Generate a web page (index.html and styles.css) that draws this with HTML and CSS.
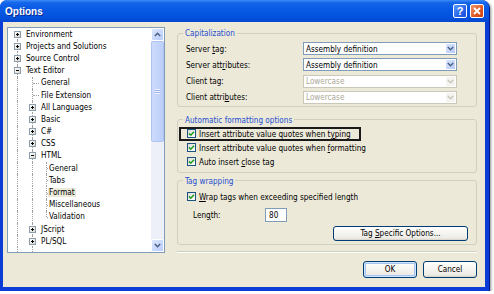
FILE: index.html
```html
<!DOCTYPE html>
<html lang="en">
<head>
    <meta charset="UTF-8">
    <meta name="viewport" content="width=device-width, initial-scale=1.0">
    <title>Options</title>
    <link rel="stylesheet" href="styles.css">
</head>
<body>
    <div class="window">
        <div class="titlebar">
            <span class="title">Options</span>
            <div class="caption-buttons">
                <span class="cap-btn help">?</span>
                <span class="cap-btn close">
                    <svg width="8" height="8" viewBox="0 0 8 8"><path d="M1 1L7 7M7 1L1 7" stroke="#fff" stroke-width="1.8"/></svg>
                </span>
            </div>
        </div>

        <div class="client">
            <!-- Category tree -->
            <div class="tree">
                <div class="nodes">
                    <div class="node"><span class="c v vb"><span class="x plus"></span></span><span class="lbl">Environment</span></div>
                    <div class="node"><span class="c v"><span class="x plus"></span></span><span class="lbl">Projects and Solutions</span></div>
                    <div class="node"><span class="c v"><span class="x plus"></span></span><span class="lbl">Source Control</span></div>
                    <div class="node"><span class="c v"><span class="x minus"></span></span><span class="lbl">Text Editor</span></div>
                    <div class="node"><span class="c v"></span><span class="c v t"></span><span class="lbl">General</span></div>
                    <div class="node"><span class="c v"></span><span class="c v t"></span><span class="lbl">File Extension</span></div>
                    <div class="node"><span class="c v"></span><span class="c v"><span class="x plus"></span></span><span class="lbl">All Languages</span></div>
                    <div class="node"><span class="c v"></span><span class="c v"><span class="x plus"></span></span><span class="lbl">Basic</span></div>
                    <div class="node"><span class="c v"></span><span class="c v"><span class="x plus"></span></span><span class="lbl">C#</span></div>
                    <div class="node"><span class="c v"></span><span class="c v"><span class="x plus"></span></span><span class="lbl">CSS</span></div>
                    <div class="node"><span class="c v"></span><span class="c v"><span class="x minus"></span></span><span class="lbl">HTML</span></div>
                    <div class="node"><span class="c v"></span><span class="c v"></span><span class="c n v t"></span><span class="lbl">General</span></div>
                    <div class="node"><span class="c v"></span><span class="c v"></span><span class="c n v t"></span><span class="lbl">Tabs</span></div>
                    <div class="node"><span class="c v"></span><span class="c v"></span><span class="c n v t"></span><span class="lbl sel">Format</span></div>
                    <div class="node"><span class="c v"></span><span class="c v"></span><span class="c n v t"></span><span class="lbl">Miscellaneous</span></div>
                    <div class="node"><span class="c v"></span><span class="c v"></span><span class="c n v vt t"></span><span class="lbl">Validation</span></div>
                    <div class="node"><span class="c v"></span><span class="c v"><span class="x plus"></span></span><span class="lbl">JScript</span></div>
                    <div class="node"><span class="c v"></span><span class="c v"><span class="x plus"></span></span><span class="lbl">PL/SQL</span></div>
                    <div class="node"><span class="c v"></span><span class="c v"></span></div>
                </div>
                <div class="scroll">
                    <span class="sb-btn">
                        <svg width="7" height="5" viewBox="0 0 7 5"><path d="M0.8 4L3.5 1.3L6.2 4" fill="none" stroke="#4D6185" stroke-width="1.5"/></svg>
                    </span>
                    <span class="thumb"><span class="grip"></span></span>
                    <span class="track"></span>
                    <span class="sb-btn">
                        <svg width="7" height="5" viewBox="0 0 7 5"><path d="M0.8 1L3.5 3.7L6.2 1" fill="none" stroke="#4D6185" stroke-width="1.5"/></svg>
                    </span>
                </div>
            </div>

            <!-- HTML > Format page -->
            <div class="pane">
                <fieldset class="group caps">
                    <legend>Capitalization</legend>
                    <div class="caps-grid">
                        <span>Server <u>t</u>ag:</span>
                        <span class="combo"><span class="val">Assembly definition</span><span class="drop"><svg width="7" height="5" viewBox="0 0 7 5"><path d="M0.8 1L3.5 3.7L6.2 1" fill="none" stroke="#4D6185" stroke-width="1.5"/></svg></span></span>
                        <span>Server att<u>r</u>ibutes:</span>
                        <span class="combo"><span class="val">Assembly definition</span><span class="drop"><svg width="7" height="5" viewBox="0 0 7 5"><path d="M0.8 1L3.5 3.7L6.2 1" fill="none" stroke="#4D6185" stroke-width="1.5"/></svg></span></span>
                        <span>Client tag:</span>
                        <span class="combo off"><span class="val">Lowercase</span><span class="drop"><svg width="7" height="5" viewBox="0 0 7 5"><path d="M0.8 1L3.5 3.7L6.2 1" fill="none" stroke="#C9C7BA" stroke-width="1.5"/></svg></span></span>
                        <span>Client attri<u>b</u>utes:</span>
                        <span class="combo off"><span class="val">Lowercase</span><span class="drop"><svg width="7" height="5" viewBox="0 0 7 5"><path d="M0.8 1L3.5 3.7L6.2 1" fill="none" stroke="#C9C7BA" stroke-width="1.5"/></svg></span></span>
                    </div>
                </fieldset>

                <fieldset class="group auto">
                    <legend>Automatic formatting options</legend>
                    <div class="check marked">
                        <span class="box"><svg width="7" height="7" viewBox="0 0 7 7"><path d="M1 3.4L2.8 5.2L6 1.8" fill="none" stroke="#21A121" stroke-width="1.6"/></svg></span>
                        <span>Insert attribute value quotes when t<u>y</u>ping</span>
                    </div>
                    <div class="check">
                        <span class="box"><svg width="7" height="7" viewBox="0 0 7 7"><path d="M1 3.4L2.8 5.2L6 1.8" fill="none" stroke="#21A121" stroke-width="1.6"/></svg></span>
                        <span>Insert attribute value quotes when <u>f</u>ormatting</span>
                    </div>
                    <div class="check">
                        <span class="box"><svg width="7" height="7" viewBox="0 0 7 7"><path d="M1 3.4L2.8 5.2L6 1.8" fill="none" stroke="#21A121" stroke-width="1.6"/></svg></span>
                        <span>Auto insert <u>c</u>lose tag</span>
                    </div>
                </fieldset>

                <fieldset class="group wrap">
                    <legend>Tag wrapping</legend>
                    <div class="check">
                        <span class="box"><svg width="7" height="7" viewBox="0 0 7 7"><path d="M1 3.4L2.8 5.2L6 1.8" fill="none" stroke="#21A121" stroke-width="1.6"/></svg></span>
                        <span><u>W</u>rap tags when exceeding specified length</span>
                    </div>
                    <div class="length-row">
                        <span class="length-label">Len<u>g</u>th:</span>
                        <span class="field">80</span>
                    </div>
                    <div class="tag-row">
                        <span class="btn tag-btn"><span>Tag <u>S</u>pecific Options...</span></span>
                    </div>
                </fieldset>

                <div class="separator"></div>

                <div class="dialog-buttons">
                    <span class="btn default">OK</span>
                    <span class="btn">Cancel</span>
                </div>
            </div>
        </div>
    </div>
</body>
</html>
```

FILE: styles.css
```css
* {
    box-sizing: border-box;
}

body {
    margin: 0;
    background: #fff;
    font-family: "DejaVu Sans Condensed", "Liberation Sans", sans-serif;
    font-size: 8.1px;
    color: #000;
}

u {
    text-decoration-thickness: 1px;
    text-underline-offset: 1px;
}

/* Window frame */
.window {
    width: 489px;
    height: 291px;
    display: flex;
    flex-direction: column;
    background: #0B3DD6;
    border-radius: 7px 7px 0 0;
    box-shadow: 1px 1px 0 #001A8C, 2px 2px 3px rgba(0, 0, 0, 0.45);
}

.titlebar {
    height: 22px;
    display: flex;
    align-items: center;
    justify-content: space-between;
    padding: 0 5px;
    border-radius: 7px 7px 0 0;
    background: linear-gradient(#3F8CF6 0%, #1566EA 12%, #0758E4 45%, #0453DE 75%, #0247CF 100%);
}

.title {
    color: #fff;
    font-family: "Liberation Sans", sans-serif;
    font-weight: bold;
    font-size: 10px;
    text-shadow: 1px 1px 0 #0B2A8F;
}

.caption-buttons {
    display: flex;
    gap: 3px;
}

.cap-btn {
    width: 14px;
    height: 14px;
    border: 1px solid #fff;
    border-radius: 2px;
    display: flex;
    align-items: center;
    justify-content: center;
    color: #fff;
    font-family: "Liberation Sans", sans-serif;
    font-weight: bold;
    font-size: 11px;
}

.help {
    background: linear-gradient(135deg, #5A9CFF, #2A63E8 60%, #1A4FD8);
}

.close {
    background: linear-gradient(135deg, #EC9A74, #E15A24 55%, #C9400F);
}

.client {
    flex: 1;
    margin: 0 4px 4px 3px;
    background: #ECE9D8;
    display: flex;
    gap: 12px;
    padding: 5px 0 0 4px;
}

/* Tree */
.tree {
    width: 158px;
    height: 226px;
    border: 1px solid #7F9DB9;
    background: #fff;
    display: flex;
    overflow: hidden;
}

.nodes {
    flex: 1;
    padding-left: 2px;
    overflow: hidden;
}

.node {
    display: flex;
    align-items: center;
    height: 12.2px;
    white-space: nowrap;
}

.c {
    position: relative;
    flex: none;
    width: 15px;
    height: 100%;
}

.c.n {
    width: 8px;
}

.c.v::before {
    content: "";
    position: absolute;
    left: 7px;
    top: 0;
    bottom: 0;
    border-left: 1px dotted #A0A0A0;
}

.c.n.v::before {
    left: 6px;
}

.c.vb::before {
    top: 50%;
}

.c.vt::before {
    bottom: 50%;
}

.c.t::after {
    content: "";
    position: absolute;
    left: 8px;
    right: 1px;
    top: 50%;
    border-top: 1px dotted #A0A0A0;
}

.c.n.t::after {
    left: 7px;
    right: 0;
}

.x {
    position: absolute;
    left: 4px;
    top: 50%;
    margin-top: -3.5px;
    width: 7px;
    height: 7px;
    border: 1px solid #8C9DAD;
    background: linear-gradient(135deg, #fff, #D9D7CC);
}

.x::before,
.plus::after {
    content: "";
    position: absolute;
    background: #000;
}

.x::before {
    left: 1px;
    top: 2px;
    width: 3px;
    height: 1px;
}

.plus::after {
    left: 2px;
    top: 1px;
    width: 1px;
    height: 3px;
}

.lbl {
    padding: 0 1px;
    line-height: 9px;
}

.lbl.sel {
    background: #ECE9D8;
}

.scroll {
    width: 13px;
    display: flex;
    flex-direction: column;
    background: #EEF0F9;
}

.sb-btn {
    height: 13px;
    flex: none;
    display: flex;
    align-items: center;
    justify-content: center;
    border: 1px solid #fff;
    border-radius: 2px;
    background: linear-gradient(135deg, #DCE6FD, #B9CDFA);
}

.thumb {
    height: 101px;
    flex: none;
    display: flex;
    align-items: center;
    justify-content: center;
    border: 1px solid #AFC3F3;
    border-radius: 2px;
    background: linear-gradient(90deg, #CDDBFC, #BCCFFA);
}

.grip {
    width: 5px;
    height: 5px;
    background: repeating-linear-gradient(#EEF3FF 0 1px, #9DB3E8 1px 2px);
}

.track {
    flex: 1;
}

/* Options page */
.pane {
    width: 300px;
    display: flex;
    flex-direction: column;
    padding-top: 1px;
    white-space: nowrap;
}

.group {
    margin: 0;
    min-width: 0;
    border: 1px solid #D0D0BF;
    border-radius: 3px;
    padding: 4px 8px 2px;
}

.group legend {
    color: #1F4FCF;
    line-height: 10px;
    padding: 0 2px;
    margin-left: -3px;
}

.caps-grid {
    display: grid;
    grid-template-columns: 117px 154px;
    row-gap: 3.3px;
    align-items: center;
}

.combo {
    height: 13px;
    display: flex;
    align-items: center;
    padding-left: 2px;
    border: 1px solid #7F9DB9;
    background: #fff;
}

.combo .val {
    flex: 1;
}

.drop {
    width: 11px;
    height: 11px;
    display: flex;
    align-items: center;
    justify-content: center;
    border: 1px solid #fff;
    border-radius: 1px;
    background: linear-gradient(135deg, #DCE6FD, #B5CAF8);
}

.combo.off {
    border-color: #C9C7BA;
    color: #ACA899;
}

.combo.off .drop {
    background: #F4F3EE;
}

.group.auto {
    margin-top: 8px;
    padding: 2px 8px 3px;
}

.check {
    display: flex;
    align-items: center;
    gap: 3px;
    height: 14px;
    padding-left: 1px;
}

.check.marked {
    width: 182px;
    margin-left: -7px;
    padding-left: 6px;
    border: 2px solid #1A1A1A;
}

.box {
    width: 9px;
    height: 9px;
    flex: none;
    display: flex;
    align-items: center;
    justify-content: center;
    border: 1px solid #1C5180;
    background: linear-gradient(135deg, #DCDCD7, #fff);
}

.group.wrap {
    margin-top: 3px;
    padding: 4px 8px 3px;
}

.length-row {
    display: flex;
    align-items: center;
    height: 14px;
    margin-top: 4px;
}

.length-label {
    width: 79px;
    padding-left: 7px;
}

.field {
    width: 22px;
    height: 14px;
    padding-left: 3px;
    display: flex;
    align-items: center;
    border: 1px solid #7F9DB9;
    background: #fff;
}

.tag-row {
    display: flex;
    justify-content: flex-end;
    margin-top: 4px;
}

.btn {
    height: 16px;
    display: flex;
    align-items: center;
    justify-content: center;
    border: 1px solid #003C74;
    border-radius: 3px;
    background: linear-gradient(#fff 0%, #F6F5F1 45%, #ECEBE6 85%, #D8D2C6 100%);
}

.tag-btn {
    width: 135px;
    height: 15px;
}

.separator {
    margin-top: 6px;
    height: 2px;
    border-top: 1px solid #D0D0BF;
    border-bottom: 1px solid #fff;
}

.dialog-buttons {
    display: flex;
    justify-content: flex-end;
    gap: 6px;
    margin-top: 8px;
}

.dialog-buttons .btn {
    width: 54px;
    height: 17px;
}

.btn.default {
    box-shadow: inset 0 0 0 1px #CEE7FF, inset 0 0 0 2px #A6C3F0;
}
```
